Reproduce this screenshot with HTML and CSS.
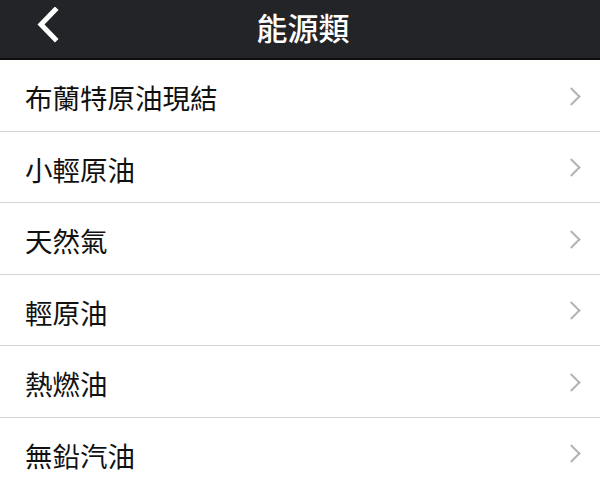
FILE: index.html
```html
<!DOCTYPE html>
<html lang="zh-Hant">
<head>
    <meta charset="UTF-8">
    <meta name="viewport" content="width=device-width, initial-scale=1.0">
    <title>能源類</title>
    <link rel="stylesheet" href="styles.css">
</head>
<body>

    <!-- Top bar -->
    <header class="top-bar">
        <a class="back" href="#">
            <svg width="24" height="36" viewBox="0 0 24 36">
                <path d="M19 3 L5 17.5 L19 32" fill="none" stroke="#fff" stroke-width="5" stroke-linecap="square"/>
            </svg>
        </a>
        <h1>能源類</h1>
    </header>

    <!-- Category list -->
    <ul class="list">
        <li><span>布蘭特原油現結</span><i class="arrow"></i></li>
        <li><span>小輕原油</span><i class="arrow"></i></li>
        <li><span>天然氣</span><i class="arrow"></i></li>
        <li><span>輕原油</span><i class="arrow"></i></li>
        <li><span>熱燃油</span><i class="arrow"></i></li>
        <li><span>無鉛汽油</span><i class="arrow"></i></li>
    </ul>

</body>
</html>
```

FILE: styles.css
```css
/* General styling */
body {
    margin: 0;
    font-family: "Noto Sans CJK TC", "Noto Sans", sans-serif;
    background: #fff;
    overflow: hidden;
}

/* Top bar */
.top-bar {
    position: relative;
    height: 58px;
    background: #232427;
    border-bottom: 2px solid #0d0d0d;
    display: flex;
    align-items: center;
    justify-content: center;
}

.top-bar h1 {
    margin: 0 0 0 6px;
    color: #fff;
    font-size: 31px;
    font-weight: 500;
    line-height: 1;
    margin-top: -5px;
}

.back {
    position: absolute;
    left: 36px;
    top: 7px;
    display: block;
}

/* List */
.list {
    list-style: none;
    margin: 0;
    padding: 0;
}

.list li {
    height: 70.5px;
    border-bottom: 1px solid #d4d4d4;
    display: flex;
    align-items: center;
    justify-content: space-between;
    padding: 0 22px 0 25px;
    font-size: 27.5px;
    color: #111;
}

.list li span {
    margin-top: 4px;
}

.arrow {
    width: 11px;
    height: 11px;
    border-top: 2.5px solid #b3b3b3;
    border-right: 2.5px solid #b3b3b3;
    transform: rotate(45deg);
    margin-top: 2px;
}
```
